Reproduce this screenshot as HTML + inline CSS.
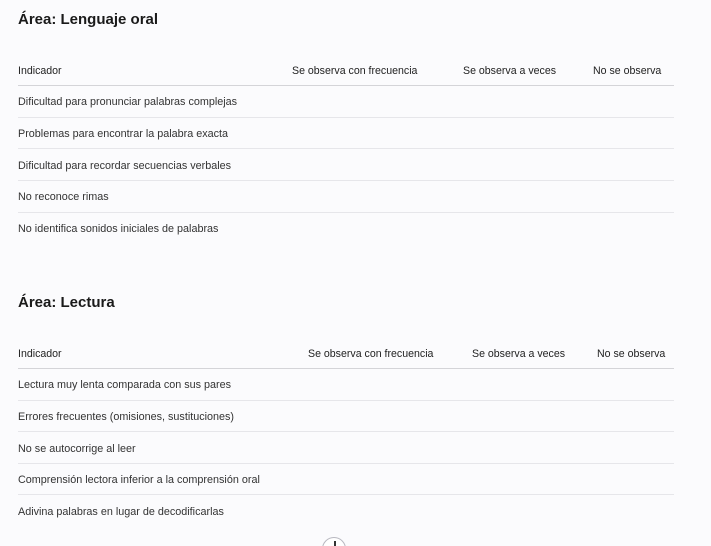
<!DOCTYPE html>
<html style="overflow:hidden;height:546px"><head><meta charset="utf-8"><style>
body{margin:0;width:711px;height:546px;background:#fbfbfd;font-family:"Liberation Sans",sans-serif;color:#222;position:relative;overflow:hidden}
.t{position:absolute;font-size:15px;font-weight:bold;color:#1a1a1a;left:18px}
.h{position:absolute;font-size:10.6px;color:#222;white-space:nowrap}
.c{position:absolute;font-size:10.8px;color:#333;left:18px;white-space:nowrap}
.l{position:absolute;left:18px;width:656px;height:1px;background:#e6e6ea}
.l.b{background:#d4d4d8}
</style></head><body>
<div class="t" style="top:11px">Área: Lenguaje oral</div>
<div class="h" style="left:18px;top:65px">Indicador</div>
<div class="h" style="left:292px;top:65px">Se observa con frecuencia</div>
<div class="h" style="left:463px;top:65px">Se observa a veces</div>
<div class="h" style="left:593px;top:65px">No se observa</div>
<div class="l b" style="top:85px"></div>
<div class="c" style="top:96px">Dificultad para pronunciar palabras complejas</div>
<div class="l" style="top:117px"></div>
<div class="c" style="top:128px">Problemas para encontrar la palabra exacta</div>
<div class="l" style="top:148px"></div>
<div class="c" style="top:160px">Dificultad para recordar secuencias verbales</div>
<div class="l" style="top:180px"></div>
<div class="c" style="top:191px">No reconoce rimas</div>
<div class="l" style="top:212px"></div>
<div class="c" style="top:223px">No identifica sonidos iniciales de palabras</div>

<div class="t" style="top:294px">Área: Lectura</div>
<div class="h" style="left:18px;top:348px">Indicador</div>
<div class="h" style="left:308px;top:348px">Se observa con frecuencia</div>
<div class="h" style="left:472px;top:348px">Se observa a veces</div>
<div class="h" style="left:597px;top:348px">No se observa</div>
<div class="l b" style="top:368px"></div>
<div class="c" style="top:379px">Lectura muy lenta comparada con sus pares</div>
<div class="l" style="top:400px"></div>
<div class="c" style="top:411px">Errores frecuentes (omisiones, sustituciones)</div>
<div class="l" style="top:431px"></div>
<div class="c" style="top:443px">No se autocorrige al leer</div>
<div class="l" style="top:463px"></div>
<div class="c" style="top:474px">Comprensión lectora inferior a la comprensión oral</div>
<div class="l" style="top:494px"></div>
<div class="c" style="top:506px">Adivina palabras en lugar de decodificarlas</div>

<div style="position:absolute;left:322px;top:537px;width:24px;height:24px;border:1px solid #b8b8c0;border-radius:50%;background:#fff;box-sizing:border-box"></div>
<div style="position:absolute;left:334px;top:541px;width:2px;height:5px;background:#333"></div>
</body></html>
